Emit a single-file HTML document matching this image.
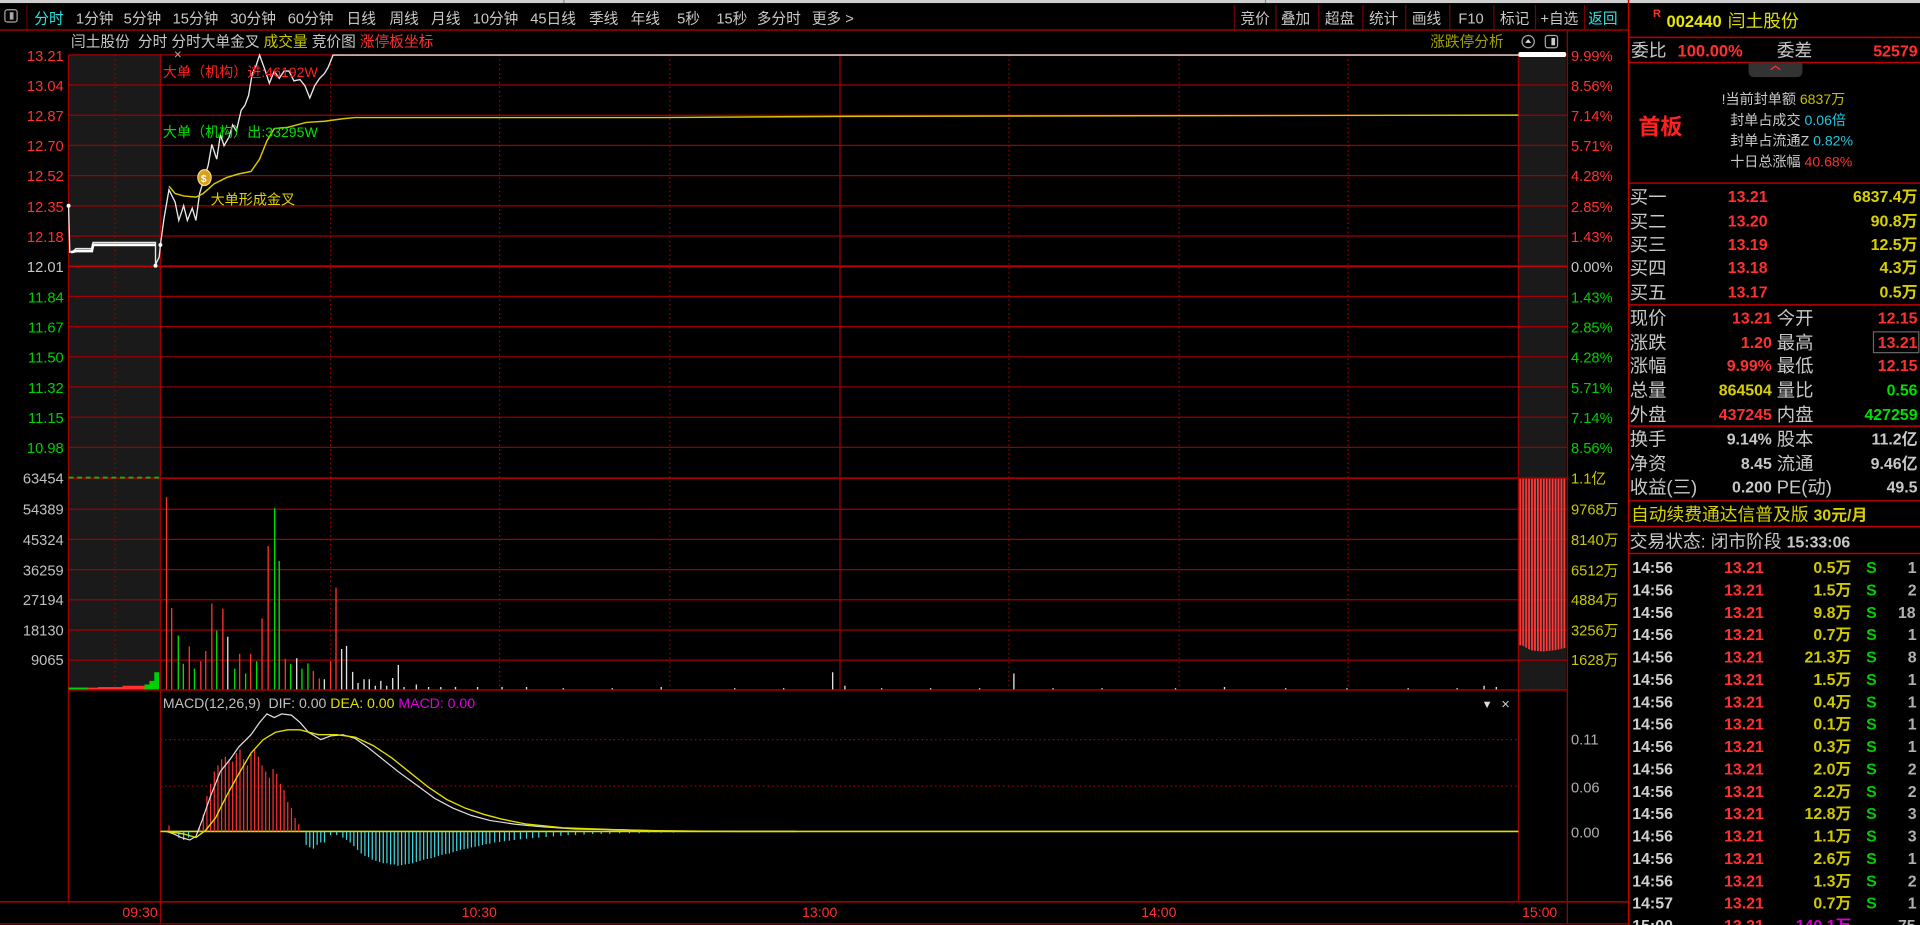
<!DOCTYPE html>
<html><head><meta charset="utf-8"><style>
html,body{margin:0;padding:0;background:#000;overflow:hidden;width:1920px;height:925px}
svg{display:block}
text{font-family:"Liberation Sans","Noto Sans CJK SC",sans-serif}
</style></head><body>
<svg width="1920" height="925" viewBox="0 0 1568 755.4" preserveAspectRatio="none" xmlns="http://www.w3.org/2000/svg">
<defs>
<pattern id="rp" width="2.4" height="10" patternUnits="userSpaceOnUse"><rect width="1.5" height="10" fill="#ff3a3a"/></pattern>
</defs>
<rect width="1568" height="756" fill="#000"/>
<rect x="0" y="0" width="1568" height="2.5" fill="#cfcfcf"/>
<rect x="460" y="0" width="1" height="2.5" fill="#888"/><rect x="1033" y="0" width="1" height="2.5" fill="#888"/>
<g font-size="12" fill="#c8c8c8">
<rect x="4" y="8" width="10" height="10" rx="2" fill="none" stroke="#aaa"/><rect x="8" y="10" width="3" height="6" fill="#aaa"/>
<line x1="22" y1="4" x2="22" y2="24" stroke="#600"/>
<text x="28" y="19" fill="#30e0e0">分时</text>
<text x="62" y="19">1分钟</text><text x="101" y="19">5分钟</text><text x="141" y="19">15分钟</text>
<text x="188" y="19">30分钟</text><text x="235" y="19">60分钟</text><text x="283" y="19">日线</text>
<text x="318" y="19">周线</text><text x="352" y="19">月线</text><text x="386" y="19">10分钟</text>
<text x="433" y="19">45日线</text><text x="481" y="19">季线</text><text x="515" y="19">年线</text>
<text x="553" y="19">5秒</text><text x="585" y="19">15秒</text><text x="618" y="19">多分时</text><text x="663" y="19">更多 &gt;</text>
<text x="1013" y="19">竞价</text><text x="1046" y="19">叠加</text><text x="1082" y="19">超盘</text>
<text x="1118" y="19">统计</text><text x="1153" y="19">画线</text><text x="1191" y="19">F10</text>
<text x="1225" y="19">标记</text><text x="1258" y="19">+自选</text><text x="1297" y="19" fill="#30e0e0">返回</text>
</g>
<g stroke="#700" stroke-width="1">
<line x1="1008" y1="4" x2="1008" y2="24"/><line x1="1042" y1="4" x2="1042" y2="24"/><line x1="1077" y1="4" x2="1077" y2="24"/>
<line x1="1113" y1="4" x2="1113" y2="24"/><line x1="1148" y1="4" x2="1148" y2="24"/><line x1="1184" y1="4" x2="1184" y2="24"/>
<line x1="1220" y1="4" x2="1220" y2="24"/><line x1="1254" y1="4" x2="1254" y2="24"/><line x1="1294" y1="4" x2="1294" y2="24"/>
</g>
<line x1="0" y1="24.5" x2="1330" y2="24.5" stroke="#c00000" stroke-width="1"/>
<g font-size="12">
<text x="58" y="38" fill="#c8c8c8">闫土股份 &#160;分时 分时大单金叉 <tspan fill="#c8c800">成交量</tspan> 竞价图 <tspan fill="#ff3030">涨停板坐标</tspan></text>
<text x="1168" y="38" fill="#a0a000">涨跌停分析</text>
</g>
<circle cx="1248" cy="34" r="5" fill="none" stroke="#aaa"/><path d="M1245.5 35 L1248 32 L1250.5 35Z" fill="#ddd"/>
<rect x="1262" y="29" width="10" height="10" rx="2" fill="none" stroke="#aaa"/><rect x="1267" y="31" width="3" height="6" fill="#ccc"/>
<rect x="56" y="44.8" width="75" height="518.7" fill="#1a1a1a"/>
<rect x="1240" y="44.8" width="39" height="518.7" fill="#1a1a1a"/>
<g stroke="#a00000" stroke-width="1">
<line x1="56" y1="44.8" x2="1280" y2="44.8"/><line x1="56" y1="69.4" x2="1280" y2="69.4"/>
<line x1="56" y1="94.1" x2="1280" y2="94.1"/><line x1="56" y1="118.7" x2="1280" y2="118.7"/>
<line x1="56" y1="143.4" x2="1280" y2="143.4"/><line x1="56" y1="168.1" x2="1280" y2="168.1"/>
<line x1="56" y1="192.7" x2="1280" y2="192.7"/><line x1="56" y1="217.4" x2="1280" y2="217.4" stroke="#c00000" stroke-width="1.4"/>
<line x1="56" y1="242" x2="1280" y2="242"/><line x1="56" y1="266.7" x2="1280" y2="266.7"/>
<line x1="56" y1="291.4" x2="1280" y2="291.4"/><line x1="56" y1="316" x2="1280" y2="316"/>
<line x1="56" y1="340.7" x2="1280" y2="340.7"/><line x1="56" y1="365.3" x2="1280" y2="365.3"/>
<line x1="56" y1="390.5" x2="1280" y2="390.5" stroke-width="1.6"/>
<line x1="56" y1="415.9" x2="1280" y2="415.9"/><line x1="56" y1="440.5" x2="1280" y2="440.5"/>
<line x1="56" y1="465.2" x2="1280" y2="465.2"/><line x1="56" y1="489.8" x2="1280" y2="489.8"/>
<line x1="56" y1="514.5" x2="1280" y2="514.5"/><line x1="56" y1="539.1" x2="1280" y2="539.1"/>
<line x1="56" y1="563.5" x2="1280" y2="563.5" stroke-width="1.3"/>
<line x1="0" y1="736.5" x2="1330" y2="736.5" stroke-width="1.3"/>
<line x1="0" y1="754.5" x2="1330" y2="754.5"/>
<line x1="56" y1="44.8" x2="56" y2="736.5"/><line x1="131" y1="44.8" x2="131" y2="754"/>
<line x1="1240" y1="44.8" x2="1240" y2="736.5"/><line x1="1280" y1="24.5" x2="1280" y2="755"/>
<line x1="686" y1="44.8" x2="686" y2="563.5"/>
</g>
<line x1="1330" y1="0" x2="1330" y2="756" stroke="#c00000" stroke-width="1.2"/>
<g stroke="#a00000" stroke-width="1" stroke-dasharray="1.2 2.5">
<line x1="94" y1="44.8" x2="94" y2="563.5"/><line x1="270" y1="44.8" x2="270" y2="563.5"/>
<line x1="408" y1="44.8" x2="408" y2="563.5"/><line x1="547" y1="44.8" x2="547" y2="563.5"/>
<line x1="824" y1="44.8" x2="824" y2="563.5"/><line x1="963" y1="44.8" x2="963" y2="563.5"/>
<line x1="1101" y1="44.8" x2="1101" y2="563.5"/>
<line x1="131" y1="604" x2="1240" y2="604"/><line x1="131" y1="642" x2="1240" y2="642"/>
</g>
<g font-size="12" text-anchor="end">
<g fill="#ff3030">
<text x="52" y="50">13.21</text><text x="52" y="74.5">13.04</text><text x="52" y="99">12.87</text>
<text x="52" y="123.5">12.70</text><text x="52" y="148">12.52</text><text x="52" y="173">12.35</text><text x="52" y="197.5">12.18</text>
</g>
<text x="52" y="222" fill="#c8c8c8">12.01</text>
<g fill="#00d000">
<text x="52" y="247">11.84</text><text x="52" y="271.5">11.67</text><text x="52" y="296">11.50</text>
<text x="52" y="321">11.32</text><text x="52" y="345.5">11.15</text><text x="52" y="370">10.98</text>
</g>
<g fill="#c0c0c0">
<text x="52" y="395">63454</text><text x="52" y="420">54389</text><text x="52" y="445">45324</text>
<text x="52" y="470">36259</text><text x="52" y="494">27194</text><text x="52" y="519">18130</text><text x="52" y="543">9065</text>
</g>
</g>
<g font-size="12">
<g fill="#ff3030">
<text x="1283" y="50">9.99%</text><text x="1283" y="74.5">8.56%</text><text x="1283" y="99">7.14%</text>
<text x="1283" y="123.5">5.71%</text><text x="1283" y="148">4.28%</text><text x="1283" y="173">2.85%</text><text x="1283" y="197.5">1.43%</text>
</g>
<text x="1283" y="222" fill="#c8c8c8">0.00%</text>
<g fill="#00d000">
<text x="1283" y="247">1.43%</text><text x="1283" y="271.5">2.85%</text><text x="1283" y="296">4.28%</text>
<text x="1283" y="321">5.71%</text><text x="1283" y="345.5">7.14%</text><text x="1283" y="370">8.56%</text>
</g>
<g fill="#c8c800">
<text x="1283" y="395">1.1亿</text><text x="1283" y="420">9768万</text><text x="1283" y="445">8140万</text>
<text x="1283" y="470">6512万</text><text x="1283" y="494">4884万</text><text x="1283" y="519">3256万</text><text x="1283" y="543">1628万</text>
</g>
<g fill="#b0b0b0"><text x="1283" y="608">0.11</text><text x="1283" y="647">0.06</text><text x="1283" y="684">0.00</text></g>
</g>
<g font-size="11.5" fill="#ff3030"><text x="100" y="749">09:30</text><text x="377" y="749">10:30</text>
<text x="655" y="749">13:00</text><text x="932" y="749">14:00</text><text x="1243" y="749">15:00</text></g>
<polyline fill="none" stroke="#e8e8e8" stroke-width="1.1" points="56,168 57,206 60,205 62,203 75,203 76,198 127,198 127,217 128,214 130,210 131,200 134,178 138,155 143,165 146,180 150,168 153,180 157,170 160,180 163,158 166,148 170,135 173,118 177,130 180,110 183,119 187,112 190,102 193,107 197,90 200,86 203,78 206,60 209,54 212,45 216,56 220,68 224,58 228,64 232,58 236,58 240,66 245,65 249,70 253,80 257,70 261,64 265,60 268,55 272,45 1240,45"/>
<polyline fill="none" stroke="#ffffff" stroke-width="2.2" points="58,206 62,205 75,205 76,200 127,200"/>
<rect x="1240" y="42.5" width="39" height="4" rx="1.5" fill="#fff"/>
<circle cx="56" cy="168" r="1.6" fill="#fff"/><circle cx="127" cy="217" r="1.6" fill="#fff"/><circle cx="131" cy="200" r="1.6" fill="#fff"/>
<polyline fill="none" stroke="#d8c800" stroke-width="1.2" points="138,152 143,158 150,160 160,161 166,158 175,150 185,145 195,142 205,140 212,130 218,115 224,105 235,104 250,100 265,99 280,97 290,96 540,96 686,95 1240,94"/>
<g font-size="11.5">
<text x="133" y="63" fill="#ff2020">大单（机构）进:46192W</text>
<text x="133" y="112" fill="#00e000">大单（机构）出:33295W</text>
<text x="172" y="167" fill="#e0d000">大单形成金叉</text>
<text x="142" y="48" fill="#aaa" font-size="11">×</text>
</g>
<ellipse cx="167" cy="145" rx="5.5" ry="6.5" fill="#d8a020" stroke="#fff3a0" stroke-width="0.8"/>
<text x="164.2" y="148.5" font-size="8" fill="#fff" font-weight="bold">$</text>
<line x1="56" y1="390" x2="131" y2="390" stroke="#00c000" stroke-width="1.5" stroke-dasharray="4 3"/>
<path d="M56 563 H80 V561.5 H56Z M80 563 H100 V561 H80Z M100 563 H118 V560 H100Z" fill="#ff3030"/>
<path d="M56 563 H72 V561.5 H56Z M118 563 H122 V559 H118Z M122 563 H126 V556 H122Z M126 563 H130 V549 H126Z" fill="#00d000"/>
<g stroke-width="1.1">
<path stroke="#ff3030" d="M136 563V406 M140.2 563V496.5 M154.6 563V528 M164 563V540 M168 563V531.6 M173 563V493 M182 563V497 M195.7 563V534 M204.7 563V534 M214 563V505 M219 563V446 M233 563V538 M255.9 563V548 M260.8 563V554 M270 563V540 M274.4 563V480"/>
<path stroke="#00e000" d="M145.6 563V519 M149.7 563V542 M158.8 563V546 M177 563V515 M191.7 563V546 M200.6 563V550 M209.6 563V540 M224.3 563V415 M228 563V458 M237.4 563V542 M246.6 563V546 M251.5 563V541.7"/>
<path stroke="#e0e0e0" d="M186 563V520 M242.3 563V537.6 M264.9 563V554.7 M279 563V530 M283 563V527.5 M288 563V548.7 M292.4 563V557.8 M297.3 563V554.7 M301.6 563V554.7 M306.5 563V560 M311 563V556 M315.8 563V560 M320.7 563V553.7 M325.3 563V543 M330 563V561 M340 563V559 M350 563V561 M360 563V561 M372 563V561 M390 563V561 M410 563V561 M430 563V561 M460 563V562 M500 563V562 M540 563V561 M600 563V562 M640 563V562 M680 563V549 M690 563V560 M720 563V562 M760 563V562 M800 563V562 M828 563V550 M860 563V562 M900 563V562 M960 563V562 M1000 563V561 M1050 563V562 M1100 563V562 M1150 563V562 M1190 563V562 M1212 563V560 M1222 563V561"/>
</g>
<path d="M1240 391 H1279 V529 L1270 531 L1260 532 L1250 531 L1243 527 L1240 527Z" fill="url(#rp)"/>
<g font-size="11.5"><text x="133" y="578" fill="#c0c0c0">MACD(12,26,9) &#160;DIF: 0.00 <tspan fill="#e0e000">DEA: 0.00</tspan> <tspan fill="#e000e0">MACD: 0.00</tspan></text>
<text x="1210" y="578" fill="#ddd" font-size="9">▼</text><text x="1226" y="579" fill="#ccc" font-size="12">×</text></g>
<line x1="131" y1="679" x2="1240" y2="679" stroke="#e0e000" stroke-width="1.3"/>
<path stroke="#ff3030" stroke-width="1" fill="none" d="M138 679V674 M163 679V676 M166 679V665 M169 679V650 M172 679V640 M175 679V630 M178 679V625 M181 679V620 M184 679V618 M187 679V620 M190 679V622 M193 679V615 M196 679V612 M199 679V620 M202 679V625 M205 679V615 M208 679V612 M211 679V618 M214 679V625 M217 679V630 M220 679V635 M223 679V628 M226 679V632 M229 679V640 M232 679V645 M235 679V655 M238 679V660 M241 679V668 M244 679V673"/>
<path stroke="#40d8e0" stroke-width="1" fill="none" d="M146 679V684 M150 679V686 M154 679V684 M250 679V690 M253 679V692 M256 679V693 M259 679V690 M262 679V688 M265 679V688 M270 679V682 M275 679V682 M280 679V684 M283 679V686 M286 679V688 M289 679V691 M292 679V694 M295 679V697 M298 679V699 M301 679V700 M304 679V702 M307 679V703 M310 679V704 M313 679V705 M316 679V705 M319 679V706 M322 679V706 M325 679V707 M328 679V706.5 M331 679V706 M334 679V705.5 M337 679V705 M340 679V704 M343 679V703 M346 679V702 M349 679V701.5 M352 679V701 M355 679V700 M358 679V699 M361 679V698 M364 679V697.5 M367 679V697 M370 679V696 M373 679V695 M376 679V694 M379 679V693.5 M382 679V693 M385 679V692 M388 679V691.5 M391 679V691 M394 679V690 M397 679V689.5 M400 679V689 M404 679V688 M408 679V687.5 M412 679V687 M416 679V686.5 M420 679V686 M425 679V685.5 M430 679V685 M435 679V684.5 M440 679V684 M446 679V683.5 M452 679V683 M458 679V682.5 M464 679V682 M470 679V682 M477 679V681.5 M484 679V681 M491 679V681 M498 679V681 M506 679V680.5 M514 679V680.5 M522 679V680.5 M530 679V680 M540 679V680 M550 679V680"/>
<polyline fill="none" stroke="#e0e0e0" stroke-width="1" points="136,679 142,681 148,684 155,686 160,683 165,670 172,650 180,630 188,620 195,610 205,600 212,590 218,583 224,586 230,583 238,584 245,590 252,598 262,604 270,601 280,600 290,603 300,610 310,618 325,630 340,641 355,652 370,660 385,666 400,670 420,673 440,675 470,677 500,677.5 540,678.5 600,679 650,679"/>
<polyline fill="none" stroke="#e0e000" stroke-width="1.1" points="136,679 150,681 160,684 168,678 176,668 185,650 195,632 205,615 215,604 225,598 235,596 245,596 260,600 275,600 290,602 305,609 320,619 335,631 350,643 365,653 380,660 395,665 410,669 430,673 460,676 500,677.5 540,678.5 600,679 650,679"/>
<g font-size="13">
<text x="1350" y="14" fill="#ff3030" font-size="9" font-weight="bold">R</text>
<text x="1361" y="22" fill="#e8e800" font-weight="bold" font-size="13.5">002440</text>
<text x="1411" y="22" fill="#e0e000" font-size="14.5">闫土股份</text>
</g>
<g stroke="#c00000" stroke-width="1.2">
<line x1="1330" y1="30.5" x2="1568" y2="30.5"/><line x1="1330" y1="51" x2="1568" y2="51"/>
<line x1="1330" y1="149.5" x2="1568" y2="149.5"/><line x1="1330" y1="249" x2="1568" y2="249"/>
<line x1="1330" y1="348" x2="1568" y2="348"/><line x1="1330" y1="409" x2="1568" y2="409"/>
<line x1="1330" y1="430" x2="1568" y2="430"/><line x1="1330" y1="452" x2="1568" y2="452"/>
</g>
<g font-size="14.5" fill="#c8c8c8">
<text x="1332" y="46">委比</text><text x="1451" y="46">委差</text>
</g>
<text x="1370" y="46" font-size="13.5" font-weight="bold" fill="#ff3030">100.00%</text>
<text x="1566" y="46" font-size="13" font-weight="bold" fill="#ff3030" text-anchor="end">52579</text>
<path d="M1428 51 H1472 V58 Q1472 63 1467 63 H1433 Q1428 63 1428 58Z" fill="#333"/>
<path d="M1446 57 L1450 54 L1454 57" stroke="#ff3030" stroke-width="1" fill="none"/>
<text x="1338" y="110" font-size="18" fill="#ff2020" font-weight="bold">首板</text>
<g font-size="11.5" fill="#c8c8c8">
<text x="1406" y="85">!当前封单额 <tspan fill="#c8c000">6837万</tspan></text>
<text x="1413" y="102">封单占成交 <tspan fill="#20c8e0">0.06倍</tspan></text>
<text x="1413" y="119">封单占流通Z <tspan fill="#20c8e0">0.82%</tspan></text>
<text x="1413" y="136">十日总涨幅 <tspan fill="#ff3030">40.68%</tspan></text>
</g>
<g font-size="15" fill="#c8c8c8">
<text x="1331" y="166">买一</text><text x="1331" y="186">买二</text><text x="1331" y="205">买三</text><text x="1331" y="224">买四</text><text x="1331" y="244">买五</text>
<text x="1331" y="265">现价</text><text x="1331" y="285">涨跌</text><text x="1331" y="304">涨幅</text><text x="1331" y="324">总量</text><text x="1331" y="344">外盘</text>
<text x="1451" y="265">今开</text><text x="1451" y="285">最高</text><text x="1451" y="304">最低</text><text x="1451" y="324">量比</text><text x="1451" y="344">内盘</text>
<text x="1331" y="364">换手</text><text x="1331" y="384">净资</text><text x="1331" y="403">收益(三)</text>
<text x="1451" y="364">股本</text><text x="1451" y="384">流通</text><text x="1451" y="403">PE(动)</text>
</g>
<g font-size="13" font-weight="bold">
<g fill="#ff3030"><text x="1411" y="165">13.21</text><text x="1411" y="185">13.20</text><text x="1411" y="204">13.19</text><text x="1411" y="223">13.18</text><text x="1411" y="243">13.17</text></g>
<g fill="#d8d000" text-anchor="end"><text x="1566" y="165">6837.4万</text><text x="1566" y="185">90.8万</text><text x="1566" y="204">12.5万</text><text x="1566" y="223">4.3万</text><text x="1566" y="243">0.5万</text></g>
<g text-anchor="end">
<text x="1447" y="264" fill="#ff3030">13.21</text><text x="1447" y="284" fill="#ff3030">1.20</text><text x="1447" y="303" fill="#ff3030">9.99%</text>
<text x="1447" y="323" fill="#d8d000">864504</text><text x="1447" y="343" fill="#ff3030">437245</text>
<text x="1566" y="264" fill="#ff3030">12.15</text><text x="1566" y="284" fill="#ff3030">13.21</text><text x="1566" y="303" fill="#ff3030">12.15</text>
<text x="1566" y="323" fill="#00e000">0.56</text><text x="1566" y="343" fill="#00e000">427259</text>
<text x="1447" y="363" fill="#c8c8c8">9.14%</text><text x="1447" y="383" fill="#c8c8c8">8.45</text><text x="1447" y="402" fill="#c8c8c8">0.200</text>
<text x="1566" y="363" fill="#c8c8c8">11.2亿</text><text x="1566" y="383" fill="#c8c8c8">9.46亿</text><text x="1566" y="402" fill="#c8c8c8">49.5</text>
</g>
</g>
<rect x="1530" y="271" width="37" height="17" fill="none" stroke="#666" stroke-width="1"/>
<text x="1332" y="425" font-size="14.5" fill="#d8d000">自动续费通达信普及版 <tspan font-weight="bold" font-size="13">30元/月</tspan></text>
<text x="1331" y="447" font-size="14.5" fill="#c8c8c8">交易状态: 闭市阶段 <tspan font-weight="bold" font-size="13">15:33:06</tspan></text>
<g font-size="13" font-weight="bold">
<g fill="#d0d0d0">
<text x="1333" y="468">14:56</text><text x="1333" y="486.3">14:56</text><text x="1333" y="504.5">14:56</text><text x="1333" y="522.8">14:56</text>
<text x="1333" y="541.1">14:56</text><text x="1333" y="559.4">14:56</text><text x="1333" y="577.6">14:56</text><text x="1333" y="595.9">14:56</text>
<text x="1333" y="614.2">14:56</text><text x="1333" y="632.4">14:56</text><text x="1333" y="650.7">14:56</text><text x="1333" y="669">14:56</text>
<text x="1333" y="687.2">14:56</text><text x="1333" y="705.5">14:56</text><text x="1333" y="723.8">14:56</text><text x="1333" y="742">14:57</text>
<text x="1333" y="760.3">15:00</text>
</g>
<g fill="#ff3030">
<text x="1408" y="468">13.21</text><text x="1408" y="486.3">13.21</text><text x="1408" y="504.5">13.21</text><text x="1408" y="522.8">13.21</text>
<text x="1408" y="541.1">13.21</text><text x="1408" y="559.4">13.21</text><text x="1408" y="577.6">13.21</text><text x="1408" y="595.9">13.21</text>
<text x="1408" y="614.2">13.21</text><text x="1408" y="632.4">13.21</text><text x="1408" y="650.7">13.21</text><text x="1408" y="669">13.21</text>
<text x="1408" y="687.2">13.21</text><text x="1408" y="705.5">13.21</text><text x="1408" y="723.8">13.21</text><text x="1408" y="742">13.21</text>
<text x="1408" y="760.3">13.21</text>
</g>
<g fill="#d0c800" text-anchor="end">
<text x="1512" y="468">0.5万</text><text x="1512" y="486.3">1.5万</text><text x="1512" y="504.5">9.8万</text><text x="1512" y="522.8">0.7万</text>
<text x="1512" y="541.1">21.3万</text><text x="1512" y="559.4">1.5万</text><text x="1512" y="577.6">0.4万</text><text x="1512" y="595.9">0.1万</text>
<text x="1512" y="614.2">0.3万</text><text x="1512" y="632.4">2.0万</text><text x="1512" y="650.7">2.2万</text><text x="1512" y="669">12.8万</text>
<text x="1512" y="687.2">1.1万</text><text x="1512" y="705.5">2.6万</text><text x="1512" y="723.8">1.3万</text><text x="1512" y="742">0.7万</text>
<text x="1512" y="760.3" fill="#d000d0">140.1万</text>
</g>
<g fill="#00d000">
<text x="1524" y="468">S</text><text x="1524" y="486.3">S</text><text x="1524" y="504.5">S</text><text x="1524" y="522.8">S</text>
<text x="1524" y="541.1">S</text><text x="1524" y="559.4">S</text><text x="1524" y="577.6">S</text><text x="1524" y="595.9">S</text>
<text x="1524" y="614.2">S</text><text x="1524" y="632.4">S</text><text x="1524" y="650.7">S</text><text x="1524" y="669">S</text>
<text x="1524" y="687.2">S</text><text x="1524" y="705.5">S</text><text x="1524" y="723.8">S</text><text x="1524" y="742">S</text>
</g>
<g fill="#b0b0b0">
<text x="1558" y="468">1</text><text x="1558" y="486.3">2</text><text x="1550" y="504.5">18</text><text x="1558" y="522.8">1</text>
<text x="1558" y="541.1">8</text><text x="1558" y="559.4">1</text><text x="1558" y="577.6">1</text><text x="1558" y="595.9">1</text>
<text x="1558" y="614.2">1</text><text x="1558" y="632.4">2</text><text x="1558" y="650.7">2</text><text x="1558" y="669">3</text>
<text x="1558" y="687.2">3</text><text x="1558" y="705.5">1</text><text x="1558" y="723.8">2</text><text x="1558" y="742">1</text>
<text x="1550" y="760.3">75</text>
</g>
</g>
</svg>
</body></html>
